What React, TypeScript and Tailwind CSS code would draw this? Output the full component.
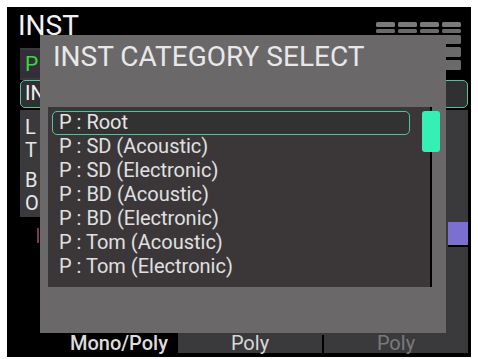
import React from "react";

const rows = [
  "P : Root",
  "P : SD (Acoustic)",
  "P : SD (Electronic)",
  "P : BD (Acoustic)",
  "P : BD (Electronic)",
  "P : Tom (Acoustic)",
  "P : Tom (Electronic)",
];

function GridIcon() {
  const cols = [0, 22, 44, 66];
  return (
    <svg width="86" height="52" viewBox="0 0 86 52" className="mt-[15px] mr-[9px] shrink-0">
      {cols.map((x) => (
        <rect key={"a" + x} x={x} y={0} width={19} height={5} rx={1.5} fill="#7a7a7a" />
      ))}
      {cols.map((x) => (
        <rect key={"b" + x} x={x} y={7} width={19} height={4} rx={1.5} fill="#6a6a6a" />
      ))}
      <rect x={66} y={13} width={19} height={9} rx={1.5} fill="#6a6a6a" />
      <rect x={66} y={25} width={19} height={10} rx={1.5} fill="#6a6a6a" />
      <rect x={66} y={38} width={19} height={10} rx={1.5} fill="#6a6a6a" />
    </svg>
  );
}

export default function App() {
  return (
    <div
      className="w-[478px] h-[359px] bg-white pt-[7px] pl-[7px] overflow-hidden"
      style={{ fontFamily: "Roboto, 'Liberation Sans', sans-serif" }}
    >
      <div className="relative w-[464px] h-[350px] bg-black flex flex-col overflow-hidden">
        {/* header */}
        <div className="flex h-[41px] shrink-0 items-start">
          <div className="pl-[11px] pt-[3px] text-[28px] leading-[32px] text-[#f2f2f2]">INST</div>
          <div className="ml-auto">
            <GridIcon />
          </div>
        </div>

        {/* P row */}
        <div className="flex h-[32px] pl-[13px] shrink-0">
          <div className="w-[20px] h-full bg-[#3a3a3c] pt-[2px]">
            <div className="h-[28px] bg-[#342d3a] pl-[5px] text-[21px] leading-[28px] text-[#3ad63c]">P</div>
          </div>
        </div>

        {/* IN row */}
        <div className="flex pl-[13px] pr-[3px] shrink-0">
          <div className="h-[28px] w-full rounded-[5px] border-[1.5px] border-[#4fc49c] bg-[#303032] pl-[4px] text-[20px] leading-[25px] text-[#f0f0f0] overflow-hidden whitespace-nowrap">
            INST
          </div>
        </div>

        {/* lower body */}
        <div className="flex flex-1 pl-[13px] pt-[2px]">
          <div className="flex flex-col">
            <div className="w-[20px] bg-[#3a3a3c] pt-[6px] pb-[2px] pl-[5px] text-[20px] leading-[23px] text-[#e8e8e8] whitespace-nowrap">
              <div>L</div>
              <div>T</div>
              <div className="mt-[7px]">B</div>
              <div>O</div>
            </div>
            <div className="ml-[17px] mt-[11px] w-[2px] h-[15px] bg-[#7a3a4a]" />
          </div>
          <div className="ml-auto mr-[3px] w-[22px] bg-[#3a3a3c] pt-[112px] pl-[2px]">
            <div className="w-[20px] h-[25px] bg-[#7b6fd2] border-b-2 border-black" />
          </div>
        </div>

        {/* bottom bar */}
        <div className="flex h-[20px] shrink-0 mb-[4px] text-[20px] leading-[20px]">
          <div className="w-[171px] pl-[63px] text-[#dcdcdc] font-medium whitespace-nowrap">Mono/Poly</div>
          <div className="flex w-[290px] bg-[#3a3a3c]">
            <div className="w-[144px] text-center text-[#d8d8d8]">Poly</div>
            <div className="w-[2px] bg-black mt-[2px]" />
            <div className="w-[144px] text-center text-[#7a7a7a]">Poly</div>
          </div>
        </div>

        {/* modal overlay */}
        <div className="absolute left-[33px] top-[28px] w-[406px] h-[298px] bg-[#6b686a] flex flex-col">
          <div className="pl-[13px] pt-[6px] text-[28px] leading-[32px] text-[#e8e8e8] whitespace-nowrap">
            INST CATEGORY SELECT
          </div>
          <div className="relative flex ml-[8px] mt-[34px] h-[180px]">
            <div className="w-[382px] h-full bg-[#3b3739] pt-[4px] pl-[4px]">
              {rows.map((r, i) => (
                <div
                  key={r}
                  className={
                    i === 0
                      ? "w-[358px] h-[24px] rounded-[5px] border-[1.5px] border-[#4fc49c] bg-[#333233] pl-[6px] text-[20px] leading-[21px] text-[#e4e4e4] whitespace-nowrap"
                      : "w-[358px] h-[24px] border-[1.5px] border-transparent pl-[6px] text-[20px] leading-[21px] text-[#e0e0e0] whitespace-nowrap"
                  }
                >
                  {r}
                </div>
              ))}
            </div>
            <div className="w-[2px] h-full bg-black" />
            <div className="absolute left-[374px] top-[4px] w-[18px] h-[41px] rounded-[3px] bg-[#35efb5]" />
          </div>
        </div>
      </div>
    </div>
  );
}
